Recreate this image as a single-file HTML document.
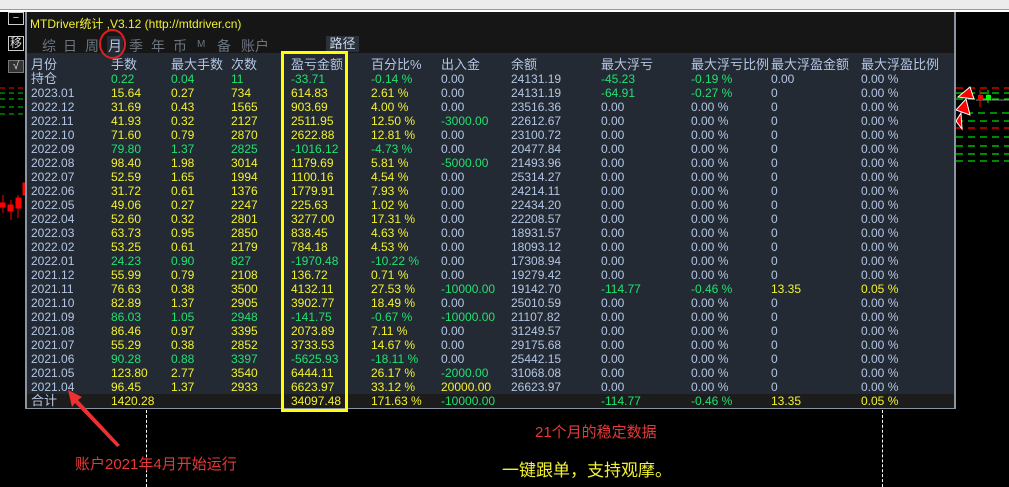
<!DOCTYPE html>
<html><head><meta charset="utf-8"><style>
*{margin:0;padding:0;box-sizing:border-box}
body{width:1009px;height:487px;background:#000;position:relative;overflow:hidden;font-family:"Liberation Sans","Noto Sans CJK SC",sans-serif}
.tb{position:absolute;left:0;top:0;width:1009px;height:10px;background:#ececec;border-bottom:1px solid #999}
.tb2{position:absolute;left:0;top:10px;width:1009px;height:2px;background:#fff}
.panel{position:absolute;left:25px;top:12px;width:931px;height:397px;background:#232a33;border-left:2px solid #8a94a3;border-right:2px solid #8a94a3;border-bottom:2px solid #8a94a3}
.title{position:absolute;left:27px;top:12px;width:927px;height:41px;background:#161616}
.r{position:absolute;left:27px;width:927px;height:14px;font-size:12px;line-height:14px;white-space:nowrap}
.r span{position:absolute;top:0}
.b{color:#b4c6e4}.y{color:#f2f230}.g{color:#22e070}
.h{font-size:13px}
.c0{left:4px}.c1{left:84px}.c2{left:144px}.c3{left:204px}.c4{left:264px}.c5{left:344px}.c6{left:414px}.c7{left:484px}.c8{left:574px}.c9{left:664px}.c10{left:744px}.c11{left:834px}
.tot{background:#1c1c1c}
</style></head><body>
<div class="tb"></div><div class="tb2"></div>
<div style="position:absolute;left:8px;top:12px;width:16px;height:13px;border:1px solid #ccc;color:#ddd;font-size:11px;line-height:10px;text-align:center">−</div>
<div style="position:absolute;left:8px;top:36px;width:16px;height:15px;border:1px solid #ccc;color:#ddd;font-size:12px;line-height:13px;text-align:center">移</div>
<div style="position:absolute;left:8px;top:60px;width:16px;height:13px;background:#333;border:1px solid #777;color:#ddd;font-size:11px;line-height:11px;text-align:center">√</div>
<svg style="position:absolute;left:0;top:85px" width="26" height="150">
<g stroke-dasharray="5 4" stroke-width="1"><line x1="0" y1="3" x2="26" y2="3" stroke="#f00"/><line x1="0" y1="8" x2="26" y2="8" stroke="#0c0"/><line x1="0" y1="14" x2="26" y2="14" stroke="#0c0"/><line x1="0" y1="22" x2="26" y2="22" stroke="#0c0"/><line x1="0" y1="29" x2="26" y2="29" stroke="#0c0"/></g>
<g fill="#f00" stroke="#f00"><line x1="3" y1="110" x2="3" y2="128"/><rect x="0" y="118" width="5" height="4"/><line x1="11" y1="115" x2="11" y2="135"/><rect x="8" y="120" width="5" height="6"/><line x1="18" y1="110" x2="18" y2="133"/><rect x="16" y="113" width="5" height="10"/><rect x="23" y="98" width="2" height="12"/></g>
</svg>
<svg style="position:absolute;left:956px;top:85px" width="53" height="80">
<g stroke-dasharray="7 5" stroke-width="1.2"><line x1="0" y1="3" x2="53" y2="3" stroke="#f00"/><line x1="0" y1="8" x2="53" y2="8" stroke="#0d0"/><line x1="0" y1="14" x2="53" y2="14" stroke="#0d0"/><line x1="10" y1="28" x2="53" y2="28" stroke="#0d0"/><line x1="0" y1="36" x2="53" y2="36" stroke="#0d0"/><line x1="0" y1="43" x2="53" y2="43" stroke="#f00"/><line x1="0" y1="52" x2="53" y2="52" stroke="#0d0"/><line x1="0" y1="61" x2="53" y2="61" stroke="#0d0"/><line x1="0" y1="69" x2="53" y2="69" stroke="#0d0"/><line x1="0" y1="76" x2="53" y2="76" stroke="#0d0"/></g>
<line x1="20" y1="15" x2="53" y2="15" stroke="#888"/>
<rect x="22" y="10" width="5" height="5" fill="#f00"/><line x1="24" y1="5" x2="24" y2="22" stroke="#f00"/>
<rect x="30" y="10" width="5" height="5" fill="#0f0"/><line x1="32" y1="5" x2="32" y2="18" stroke="#0f0"/>
<path d="M2 12 L14 2 L18 14 Z M0 25 L10 14 L14 30 Z M0 36 L5 28 L6 44Z" fill="#f00" stroke="#fff"/>
</svg>
<div class="panel"></div>
<div class="title"></div>
<div style="position:absolute;left:30px;top:15px;color:#f2f230;font-size:12px">MTDriver统计 ,V3.12 (http://mtdriver.cn)</div>
<div style="position:absolute;left:42px;top:36px;color:#6c7580;font-size:14px;white-space:nowrap">
<span style="position:absolute;left:0">综</span><span style="position:absolute;left:21px">日</span><span style="position:absolute;left:43px">周</span><span style="position:absolute;left:65px;color:#b4c6e4;background:#232a33;padding:0 1px">月</span><span style="position:absolute;left:87px">季</span><span style="position:absolute;left:109px">年</span><span style="position:absolute;left:131px">币</span><span style="position:absolute;left:155px;font-size:10px;top:3px">M</span><span style="position:absolute;left:175px">备</span><span style="position:absolute;left:199px">账户</span>
</div>
<div style="position:absolute;left:326px;top:36px;width:33px;height:16px;background:#2a3139;color:#c8d4e8;font-size:13px;line-height:16px;text-align:center">路径</div>
<div style="position:absolute;left:99px;top:29px;width:27px;height:30px;border:2px solid #e02020;border-radius:50%"></div>

<div class="r b h" style="top:58px"><span class="c0">月份</span><span class="c1">手数</span><span class="c2">最大手数</span><span class="c3">次数</span><span class="c4">盈亏金额</span><span class="c5">百分比%</span><span class="c6">出入金</span><span class="c7">余额</span><span class="c8">最大浮亏</span><span class="c9">最大浮亏比例</span><span class="c10">最大浮盈金额</span><span class="c11">最大浮盈比例</span></div>
<div class="r" style="top:72px"><span class="c0 b h">持仓</span><span class="c1 g">0.22</span><span class="c2 g">0.04</span><span class="c3 g">11</span><span class="c4 g">-33.71</span><span class="c5 g">-0.14 %</span><span class="c6 b">0.00</span><span class="c7 b">24131.19</span><span class="c8 g">-45.23</span><span class="c9 g">-0.19 %</span><span class="c10 b">0.00</span><span class="c11 b">0.00 %</span></div>
<div class="r" style="top:86px"><span class="c0 b">2023.01</span><span class="c1 y">15.64</span><span class="c2 y">0.27</span><span class="c3 y">734</span><span class="c4 y">614.83</span><span class="c5 y">2.61 %</span><span class="c6 b">0.00</span><span class="c7 b">24131.19</span><span class="c8 g">-64.91</span><span class="c9 g">-0.27 %</span><span class="c10 b">0</span><span class="c11 b">0.00 %</span></div>
<div class="r" style="top:100px"><span class="c0 b">2022.12</span><span class="c1 y">31.69</span><span class="c2 y">0.43</span><span class="c3 y">1565</span><span class="c4 y">903.69</span><span class="c5 y">4.00 %</span><span class="c6 b">0.00</span><span class="c7 b">23516.36</span><span class="c8 b">0.00</span><span class="c9 b">0.00 %</span><span class="c10 b">0</span><span class="c11 b">0.00 %</span></div>
<div class="r" style="top:114px"><span class="c0 b">2022.11</span><span class="c1 y">41.93</span><span class="c2 y">0.32</span><span class="c3 y">2127</span><span class="c4 y">2511.95</span><span class="c5 y">12.50 %</span><span class="c6 g">-3000.00</span><span class="c7 b">22612.67</span><span class="c8 b">0.00</span><span class="c9 b">0.00 %</span><span class="c10 b">0</span><span class="c11 b">0.00 %</span></div>
<div class="r" style="top:128px"><span class="c0 b">2022.10</span><span class="c1 y">71.60</span><span class="c2 y">0.79</span><span class="c3 y">2870</span><span class="c4 y">2622.88</span><span class="c5 y">12.81 %</span><span class="c6 b">0.00</span><span class="c7 b">23100.72</span><span class="c8 b">0.00</span><span class="c9 b">0.00 %</span><span class="c10 b">0</span><span class="c11 b">0.00 %</span></div>
<div class="r" style="top:142px"><span class="c0 b">2022.09</span><span class="c1 g">79.80</span><span class="c2 g">1.37</span><span class="c3 g">2825</span><span class="c4 g">-1016.12</span><span class="c5 g">-4.73 %</span><span class="c6 b">0.00</span><span class="c7 b">20477.84</span><span class="c8 b">0.00</span><span class="c9 b">0.00 %</span><span class="c10 b">0</span><span class="c11 b">0.00 %</span></div>
<div class="r" style="top:156px"><span class="c0 b">2022.08</span><span class="c1 y">98.40</span><span class="c2 y">1.98</span><span class="c3 y">3014</span><span class="c4 y">1179.69</span><span class="c5 y">5.81 %</span><span class="c6 g">-5000.00</span><span class="c7 b">21493.96</span><span class="c8 b">0.00</span><span class="c9 b">0.00 %</span><span class="c10 b">0</span><span class="c11 b">0.00 %</span></div>
<div class="r" style="top:170px"><span class="c0 b">2022.07</span><span class="c1 y">52.59</span><span class="c2 y">1.65</span><span class="c3 y">1994</span><span class="c4 y">1100.16</span><span class="c5 y">4.54 %</span><span class="c6 b">0.00</span><span class="c7 b">25314.27</span><span class="c8 b">0.00</span><span class="c9 b">0.00 %</span><span class="c10 b">0</span><span class="c11 b">0.00 %</span></div>
<div class="r" style="top:184px"><span class="c0 b">2022.06</span><span class="c1 y">31.72</span><span class="c2 y">0.61</span><span class="c3 y">1376</span><span class="c4 y">1779.91</span><span class="c5 y">7.93 %</span><span class="c6 b">0.00</span><span class="c7 b">24214.11</span><span class="c8 b">0.00</span><span class="c9 b">0.00 %</span><span class="c10 b">0</span><span class="c11 b">0.00 %</span></div>
<div class="r" style="top:198px"><span class="c0 b">2022.05</span><span class="c1 y">49.06</span><span class="c2 y">0.27</span><span class="c3 y">2247</span><span class="c4 y">225.63</span><span class="c5 y">1.02 %</span><span class="c6 b">0.00</span><span class="c7 b">22434.20</span><span class="c8 b">0.00</span><span class="c9 b">0.00 %</span><span class="c10 b">0</span><span class="c11 b">0.00 %</span></div>
<div class="r" style="top:212px"><span class="c0 b">2022.04</span><span class="c1 y">52.60</span><span class="c2 y">0.32</span><span class="c3 y">2801</span><span class="c4 y">3277.00</span><span class="c5 y">17.31 %</span><span class="c6 b">0.00</span><span class="c7 b">22208.57</span><span class="c8 b">0.00</span><span class="c9 b">0.00 %</span><span class="c10 b">0</span><span class="c11 b">0.00 %</span></div>
<div class="r" style="top:226px"><span class="c0 b">2022.03</span><span class="c1 y">63.73</span><span class="c2 y">0.95</span><span class="c3 y">2850</span><span class="c4 y">838.45</span><span class="c5 y">4.63 %</span><span class="c6 b">0.00</span><span class="c7 b">18931.57</span><span class="c8 b">0.00</span><span class="c9 b">0.00 %</span><span class="c10 b">0</span><span class="c11 b">0.00 %</span></div>
<div class="r" style="top:240px"><span class="c0 b">2022.02</span><span class="c1 y">53.25</span><span class="c2 y">0.61</span><span class="c3 y">2179</span><span class="c4 y">784.18</span><span class="c5 y">4.53 %</span><span class="c6 b">0.00</span><span class="c7 b">18093.12</span><span class="c8 b">0.00</span><span class="c9 b">0.00 %</span><span class="c10 b">0</span><span class="c11 b">0.00 %</span></div>
<div class="r" style="top:254px"><span class="c0 b">2022.01</span><span class="c1 g">24.23</span><span class="c2 g">0.90</span><span class="c3 g">827</span><span class="c4 g">-1970.48</span><span class="c5 g">-10.22 %</span><span class="c6 b">0.00</span><span class="c7 b">17308.94</span><span class="c8 b">0.00</span><span class="c9 b">0.00 %</span><span class="c10 b">0</span><span class="c11 b">0.00 %</span></div>
<div class="r" style="top:268px"><span class="c0 b">2021.12</span><span class="c1 y">55.99</span><span class="c2 y">0.79</span><span class="c3 y">2108</span><span class="c4 y">136.72</span><span class="c5 y">0.71 %</span><span class="c6 b">0.00</span><span class="c7 b">19279.42</span><span class="c8 b">0.00</span><span class="c9 b">0.00 %</span><span class="c10 b">0</span><span class="c11 b">0.00 %</span></div>
<div class="r" style="top:282px"><span class="c0 b">2021.11</span><span class="c1 y">76.63</span><span class="c2 y">0.38</span><span class="c3 y">3500</span><span class="c4 y">4132.11</span><span class="c5 y">27.53 %</span><span class="c6 g">-10000.00</span><span class="c7 b">19142.70</span><span class="c8 g">-114.77</span><span class="c9 g">-0.46 %</span><span class="c10 y">13.35</span><span class="c11 y">0.05 %</span></div>
<div class="r" style="top:296px"><span class="c0 b">2021.10</span><span class="c1 y">82.89</span><span class="c2 y">1.37</span><span class="c3 y">2905</span><span class="c4 y">3902.77</span><span class="c5 y">18.49 %</span><span class="c6 b">0.00</span><span class="c7 b">25010.59</span><span class="c8 b">0.00</span><span class="c9 b">0.00 %</span><span class="c10 b">0</span><span class="c11 b">0.00 %</span></div>
<div class="r" style="top:310px"><span class="c0 b">2021.09</span><span class="c1 g">86.03</span><span class="c2 g">1.05</span><span class="c3 g">2948</span><span class="c4 g">-141.75</span><span class="c5 g">-0.67 %</span><span class="c6 g">-10000.00</span><span class="c7 b">21107.82</span><span class="c8 b">0.00</span><span class="c9 b">0.00 %</span><span class="c10 b">0</span><span class="c11 b">0.00 %</span></div>
<div class="r" style="top:324px"><span class="c0 b">2021.08</span><span class="c1 y">86.46</span><span class="c2 y">0.97</span><span class="c3 y">3395</span><span class="c4 y">2073.89</span><span class="c5 y">7.11 %</span><span class="c6 b">0.00</span><span class="c7 b">31249.57</span><span class="c8 b">0.00</span><span class="c9 b">0.00 %</span><span class="c10 b">0</span><span class="c11 b">0.00 %</span></div>
<div class="r" style="top:338px"><span class="c0 b">2021.07</span><span class="c1 y">55.29</span><span class="c2 y">0.38</span><span class="c3 y">2852</span><span class="c4 y">3733.53</span><span class="c5 y">14.67 %</span><span class="c6 b">0.00</span><span class="c7 b">29175.68</span><span class="c8 b">0.00</span><span class="c9 b">0.00 %</span><span class="c10 b">0</span><span class="c11 b">0.00 %</span></div>
<div class="r" style="top:352px"><span class="c0 b">2021.06</span><span class="c1 g">90.28</span><span class="c2 g">0.88</span><span class="c3 g">3397</span><span class="c4 g">-5625.93</span><span class="c5 g">-18.11 %</span><span class="c6 b">0.00</span><span class="c7 b">25442.15</span><span class="c8 b">0.00</span><span class="c9 b">0.00 %</span><span class="c10 b">0</span><span class="c11 b">0.00 %</span></div>
<div class="r" style="top:366px"><span class="c0 b">2021.05</span><span class="c1 y">123.80</span><span class="c2 y">2.77</span><span class="c3 y">3540</span><span class="c4 y">6444.11</span><span class="c5 y">26.17 %</span><span class="c6 g">-2000.00</span><span class="c7 b">31068.08</span><span class="c8 b">0.00</span><span class="c9 b">0.00 %</span><span class="c10 b">0</span><span class="c11 b">0.00 %</span></div>
<div class="r" style="top:380px"><span class="c0 b">2021.04</span><span class="c1 y">96.45</span><span class="c2 y">1.37</span><span class="c3 y">2933</span><span class="c4 y">6623.97</span><span class="c5 y">33.12 %</span><span class="c6 y">20000.00</span><span class="c7 b">26623.97</span><span class="c8 b">0.00</span><span class="c9 b">0.00 %</span><span class="c10 b">0</span><span class="c11 b">0.00 %</span></div>
<div class="r tot" style="top:394px"><span class="c0 b h">合计</span><span class="c1 y">1420.28</span><span class="c4 y">34097.48</span><span class="c5 y">171.63 %</span><span class="c6 g">-10000.00</span><span class="c8 g">-114.77</span><span class="c9 g">-0.46 %</span><span class="c10 y">13.35</span><span class="c11 y">0.05 %</span></div>

<div style="position:absolute;left:281px;top:51px;width:67px;height:361px;border:3px solid #ffff00"></div>

<div style="position:absolute;left:146px;top:410px;height:77px;border-left:1px dashed #fff"></div>
<div style="position:absolute;left:882px;top:410px;height:77px;border-left:1px dashed #fff"></div>

<svg style="position:absolute;left:60px;top:385px" width="70" height="70">
<path d="M8 5 L12 22 L15 18 L57 62 L60 60 L18 15 L22 12 Z" fill="#ee3030"/>
</svg>
<div style="position:absolute;left:75px;top:453px;color:#e83838;font-size:15px">账户2021年4月开始运行</div>
<div style="position:absolute;left:535px;top:421px;color:#e83838;font-size:15px">21个月的稳定数据</div>
<div style="position:absolute;left:502px;top:456px;color:#f2f230;font-size:17px">一键跟单，支持观摩。</div>
</body></html>
